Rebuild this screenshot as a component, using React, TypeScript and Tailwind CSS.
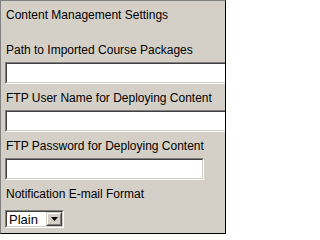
import React from "react";

const font = { fontFamily: '"Liberation Sans", Arial, sans-serif' };

function Label({ text, className = "" }: { text: string; className?: string }) {
  return (
    <div className={`h-[20px] whitespace-nowrap pl-[5px] text-[12px] leading-[20px] text-black ${className}`}>
      {text}
    </div>
  );
}

// classic sunken 2px border
function Sunken({ className = "", children }: { className?: string; children?: React.ReactNode }) {
  return (
    <div className={`border border-t-[#808080] border-l-[#808080] border-b-white border-r-white ${className}`}>
      <div className="h-full w-full border border-t-[#404040] border-l-[#404040] border-b-[#d4d0c8] border-r-[#d4d0c8] bg-white">
        {children}
      </div>
    </div>
  );
}

export default function App() {
  return (
    <div
      style={font}
      className="h-[234px] w-[226px] overflow-hidden border border-t-[#808080] border-l-[#808080] border-b-black border-r-black bg-[#d4d0c8]"
    >
      <Label text="Content Management Settings" className="mt-[4px]" />
      <Label text="Path to Imported Course Packages" className="mt-[15px]" />
      <Sunken className="ml-[4px] mt-[2px] h-[22px] w-[260px] shrink-0" />
      <Label text="FTP User Name for Deploying Content" className="mt-[4px]" />
      <Sunken className="ml-[4px] mt-[2px] h-[22px] w-[260px]" />
      <Label text="FTP Password for Deploying Content" className="mt-[4px]" />
      <Sunken className="ml-[4px] mt-[2px] h-[22px] w-[199px]" />
      <Label text="Notification E-mail Format" className="mt-[4px]" />
      <Sunken className="ml-[4px] mt-[6px] h-[18px] w-[59px]">
        <div className="flex h-full items-center">
          <span className="flex-1 pl-[2px] text-[13px] leading-none text-black">Plain</span>
          <div className="h-full w-[16px] border border-t-[#d4d0c8] border-l-[#d4d0c8] border-b-[#404040] border-r-[#404040]">
            <div className="flex h-full w-full items-center justify-center border border-t-white border-l-white border-b-[#808080] border-r-[#808080] bg-[#d4d0c8]">
              <svg width="7" height="4" viewBox="0 0 7 4">
                <path d="M0 0h7L3.5 4z" fill="#000" />
              </svg>
            </div>
          </div>
        </div>
      </Sunken>
    </div>
  );
}
